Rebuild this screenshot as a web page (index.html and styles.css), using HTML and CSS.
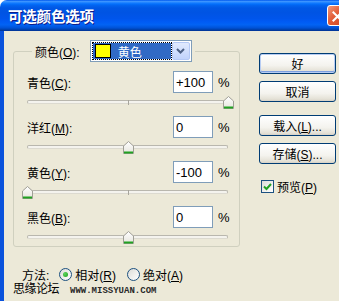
FILE: index.html
```html
<!DOCTYPE html>
<html lang="zh-CN">
<head>
    <meta charset="UTF-8">
    <title>可选颜色选项</title>
    <link rel="stylesheet" href="styles.css">
</head>
<body>
    <div class="window">
        <div class="titlebar">
            <span class="title">可选颜色选项</span>
            <span class="close">
                <svg width="21" height="21" viewBox="0 0 21 21"><path d="M6 6 L15 15 M15 6 L6 15" stroke="#fff" stroke-width="2.2" stroke-linecap="square"/></svg>
            </span>
        </div>
        <div class="client">
            <div class="main">
                <div class="group">
                    <div class="legend">
                        <label>颜色(<u>O</u>):</label>
                        <div class="combo">
                            <div class="combo-value"><span class="swatch"></span>黄色</div>
                            <div class="combo-btn">
                                <svg width="9" height="6" viewBox="0 0 9 6"><path d="M1 1 L4.5 4.5 L8 1" fill="none" stroke="#4D6185" stroke-width="2"/></svg>
                            </div>
                        </div>
                    </div>

                    <div class="row">
                        <div class="head">
                            <label>青色(<u>C</u>):</label>
                            <input type="text" value="+100">
                            <span class="pct">%</span>
                        </div>
                        <div class="slider">
                            <div class="track"></div>
                            <span class="tick"></span>
                            <span class="thumb" style="left: 100%"></span>
                        </div>
                    </div>
                    <div class="row">
                        <div class="head">
                            <label>洋红(<u>M</u>):</label>
                            <input type="text" value="0">
                            <span class="pct">%</span>
                        </div>
                        <div class="slider">
                            <div class="track"></div>
                            <span class="tick"></span>
                            <span class="thumb" style="left: 50%"></span>
                        </div>
                    </div>
                    <div class="row">
                        <div class="head">
                            <label>黄色(<u>Y</u>):</label>
                            <input type="text" value="-100">
                            <span class="pct">%</span>
                        </div>
                        <div class="slider">
                            <div class="track"></div>
                            <span class="tick"></span>
                            <span class="thumb" style="left: 0%"></span>
                        </div>
                    </div>
                    <div class="row">
                        <div class="head">
                            <label>黑色(<u>B</u>):</label>
                            <input type="text" value="0">
                            <span class="pct">%</span>
                        </div>
                        <div class="slider">
                            <div class="track"></div>
                            <span class="tick"></span>
                            <span class="thumb" style="left: 50%"></span>
                        </div>
                    </div>
                </div>

                <div class="method">
                    <span class="method-label">方法:</span>
                    <span class="radio checked"></span>
                    <span class="radio-text">相对(<u>R</u>)</span>
                    <span class="radio"></span>
                    <span class="radio-text">绝对(<u>A</u>)</span>
                </div>
            </div>

            <div class="side">
                <button type="button" class="btn default">好</button>
                <button type="button" class="btn">取消</button>
                <button type="button" class="btn gap">载入(<u>L</u>)...</button>
                <button type="button" class="btn">存储(<u>S</u>)...</button>
                <div class="check-row">
                    <span class="checkbox">
                        <svg width="11" height="11" viewBox="0 0 11 11"><path d="M2 5.5 L4.5 8 L9 3" fill="none" stroke="#21A121" stroke-width="2"/></svg>
                    </span>
                    <span>预览(<u>P</u>)</span>
                </div>
            </div>
        </div>

        <div class="watermark">
            <span class="wm-cn">思缘论坛</span>
            <span class="wm-url">www.missyuan.com</span>
        </div>
    </div>
</body>
</html>
```

FILE: styles.css
```css
body {
    margin: 0;
    background: #fff;
    font-family: "Liberation Sans", "Noto Sans CJK SC", sans-serif;
    font-size: 12px;
    color: #000;
}
u {
    text-decoration: underline;
}
.window {
    position: relative;
    width: 339px;
    height: 301px;
    overflow: hidden;
    border-top-left-radius: 7px;
}
.titlebar {
    display: flex;
    align-items: center;
    height: 31px;
    padding-left: 8px;
    background: linear-gradient(to bottom, #0058EE 0%, #3D95FF 5%, #1A80FF 9%, #036FFC 13%, #0262EE 18%, #0057E5 26%, #0054E3 40%, #0055EB 60%, #005BF5 70%, #0263F4 80%, #0052D6 90%, #0040AB 96%, #003092 100%);
}
.title {
    color: #fff;
    font-family: "Noto Sans CJK SC", sans-serif;
    font-weight: bold;
    font-size: 14.5px;
    letter-spacing: -0.2px;
    text-shadow: 1px 1px 0 #0F1C8A;
}
.close {
    margin-left: auto;
    margin-right: -9px;
    width: 21px;
    height: 21px;
    box-sizing: border-box;
    border: 1px solid #fff;
    border-radius: 3px;
    background: linear-gradient(135deg, #F19A7C 0%, #E35F3A 40%, #C9431F 100%);
    display: flex;
}
.client {
    display: flex;
    height: 270px;
    background: #ECE9D8;
    border-left: 4px solid #0A52DC;
}
.main {
    width: 245px;
}
.group {
    display: flex;
    flex-direction: column;
    margin: 20px 0 0 9px;
    width: 227px;
    height: 196px;
    box-sizing: border-box;
    border: 1px solid #D0D0BF;
    border-radius: 3px;
    padding: 0 11px 0 13px;
}
.legend {
    align-self: flex-start;
    display: flex;
    align-items: center;
    margin: -12px 0 0 5px;
    padding: 0 3px;
    background: #ECE9D8;
}
.legend label {
    margin-right: 10px;
}
.combo {
    display: flex;
    width: 102px;
    height: 22px;
    box-sizing: border-box;
    border: 1px solid #7F9DB9;
    background: #fff;
    padding: 2px 1px 2px 2px;
}
.combo-value {
    flex: 1;
    display: flex;
    align-items: center;
    padding-left: 2px;
    background: #316AC5;
    color: #fff;
    outline: 1px dotted #000;
    font-family: "Noto Sans CJK SC", sans-serif;
}
.swatch {
    width: 14px;
    height: 12px;
    background: #FFFF00;
    border: 1px solid #000;
    margin-right: 7px;
}
.combo-btn {
    width: 16px;
    margin-left: 1px;
    margin-top: -1px;
    margin-bottom: -1px;
    display: flex;
    align-items: center;
    justify-content: center;
    border: 1px solid #B5C9F5;
    border-radius: 2px;
    background: linear-gradient(to bottom, #E1EAFE, #C1D3FB);
}
.row {
    display: flex;
    flex-direction: column;
}
.legend + .row {
    margin-top: 9px;
}
.head {
    display: flex;
    align-items: center;
    height: 22px;
}
.head label {
    flex: 1;
}
.head input {
    width: 40px;
    height: 22px;
    box-sizing: border-box;
    border: 1px solid #7F9DB9;
    padding: 0 2px;
    font-family: "Liberation Sans", sans-serif;
    font-size: 13px;
    color: #000;
    background: #fff;
}
.pct {
    width: 10px;
    margin-left: 5px;
    font-size: 13px;
}
.slider {
    position: relative;
    height: 23px;
}
.track {
    position: absolute;
    left: 0;
    right: 0;
    top: 7px;
    height: 2px;
    border: 1px solid #B9B7AE;
    border-bottom-color: #DCDAD0;
    border-radius: 2px;
    background: #F4F3EE;
}
.tick {
    position: absolute;
    left: 50%;
    top: 7px;
    width: 1px;
    height: 5px;
    background: #A7A59C;
}
.thumb {
    position: absolute;
    top: 3px;
    width: 11px;
    height: 13px;
    margin-left: -5px;
    background: url("data:image/svg+xml;utf8,<svg xmlns='http://www.w3.org/2000/svg' width='11' height='13'><defs><linearGradient id='g' x1='0' y1='0' x2='0' y2='1'><stop offset='0' stop-color='%23FFFFFF'/><stop offset='1' stop-color='%23E6E5DD'/></linearGradient></defs><path d='M5.5 0.5 L10.5 5 L10.5 12.5 L0.5 12.5 L0.5 5 Z' fill='url(%23g)' stroke='%23A09F96'/><path d='M1 11.5 H10' stroke='%2321A121' stroke-width='2'/></svg>") no-repeat;
}
.method {
    display: flex;
    align-items: center;
    height: 16px;
    margin: 19px 0 0 18px;
}
.method-label {
    margin-right: 10px;
}
.radio {
    width: 13px;
    height: 13px;
    box-sizing: border-box;
    border: 1px solid #1C5180;
    border-radius: 50%;
    background: linear-gradient(135deg, #DCDCD7, #FFFFFF);
    display: flex;
    align-items: center;
    justify-content: center;
}
.radio.checked::after {
    content: "";
    width: 5px;
    height: 5px;
    border-radius: 50%;
    background: radial-gradient(circle at 35% 35%, #5BD35B, #21A121);
}
.radio-text {
    margin: 0 11px 0 3px;
}
.side {
    display: flex;
    flex-direction: column;
    align-items: flex-start;
    padding: 22px 0 0 10px;
}
.btn {
    width: 77px;
    height: 21px;
    margin-bottom: 7px;
    box-sizing: border-box;
    border: 1px solid #003C74;
    border-radius: 3px;
    background: linear-gradient(to bottom, #FFFFFF 0%, #F4F3EE 60%, #E4E1D6 90%, #D6D0C5 100%);
    font-family: "Liberation Sans", "Noto Sans CJK SC", sans-serif;
    font-size: 12px;
    color: #000;
    padding: 0;
}
.btn.default {
    box-shadow: inset 0 0 0 1px #B8CDF3, inset 0 -1px 0 1px #7D9FDF;
}
.btn.gap {
    margin-top: 6px;
}
.check-row {
    display: flex;
    align-items: center;
    margin: 7px 0 0 2px;
}
.checkbox {
    width: 13px;
    height: 13px;
    box-sizing: border-box;
    border: 1px solid #1C5180;
    background: linear-gradient(135deg, #DCDCD7, #FFFFFF);
    margin-right: 3px;
    display: flex;
    align-items: center;
    justify-content: center;
}
.watermark {
    position: absolute;
    left: 13px;
    top: 279px;
    display: flex;
    align-items: baseline;
}
.wm-cn {
    font-family: "Noto Sans CJK SC", sans-serif;
    font-size: 12px;
    letter-spacing: -0.5px;
    color: #000;
}
.wm-url {
    margin-left: 11px;
    font-family: "Liberation Mono", monospace;
    font-weight: bold;
    font-size: 9px;
    text-transform: uppercase;
    color: #2A2A2A;
}
```
